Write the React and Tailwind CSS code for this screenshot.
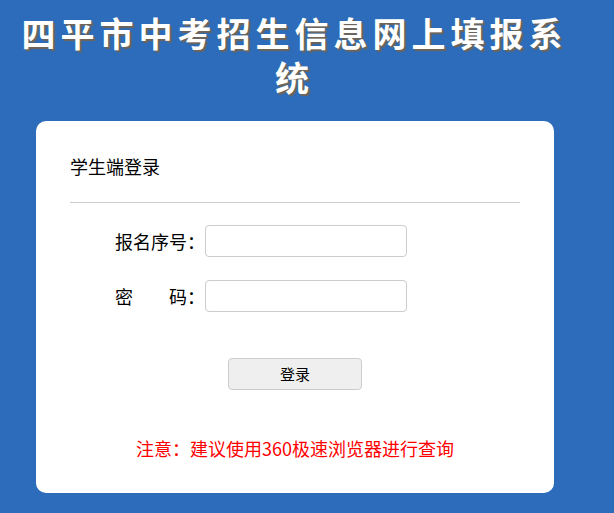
import React from 'react';

const App = () => {
  return (
    <div className="min-h-[513px] bg-[#2c6cba] font-['Noto_Sans_CJK_SC',sans-serif] overflow-hidden">
      <div className="w-[589px] pt-[11px]">
        <h1 className="w-[560px] mx-auto text-center text-white font-bold text-[34px] leading-[44px] tracking-[5px] [text-shadow:2px_2px_1px_#6f6458]">
          四平市中考招生信息网上填报系统
        </h1>

        <div className="ml-[36px] mt-[22px] w-[518px] h-[372px] bg-white rounded-[10px] px-[34px] pt-[32px]">
          <p className="text-[18px] leading-[27px] text-black">学生端登录</p>
          <div className="mt-[22px] h-px bg-[#cccccc]" />

          <div className="mt-[22px] flex flex-col gap-[23px]">
            <div className="flex items-center">
              <label className="w-[135px] text-right text-[18px] leading-[32px] text-black">报名序号：</label>
              <input type="text" className="w-[202px] h-[32px] border border-[#cccccc] rounded-[4px] outline-none px-2" />
            </div>
            <div className="flex items-center">
              <label className="w-[135px] text-right text-[18px] leading-[32px] text-black">密&emsp;&emsp;码：</label>
              <input type="password" className="w-[202px] h-[32px] border border-[#cccccc] rounded-[4px] outline-none px-2" />
            </div>
          </div>

          <div className="mt-[46px] flex justify-center">
            <button className="w-[134px] h-[32px] bg-[#efefef] border border-[#cccccc] rounded-[4px] text-[15px] text-black">
              登录
            </button>
          </div>

          <p className="mt-[45px] text-center text-[18px] leading-[27px] text-[#ff0000]">
            注意：建议使用360极速浏览器进行查询
          </p>
        </div>
      </div>
    </div>
  );
};

export default App;
